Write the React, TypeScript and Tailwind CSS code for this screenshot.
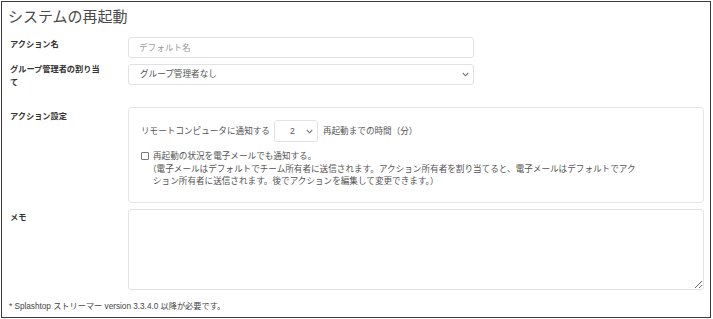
import React from "react";

const font = {
  fontFamily: '"Liberation Sans", "Noto Sans CJK JP", sans-serif',
};

function Chevron() {
  return (
    <svg width="7" height="5" viewBox="0 0 7 5" className="shrink-0">
      <path d="M0.8 1 L3.5 3.8 L6.2 1" fill="none" stroke="#777" strokeWidth="1.1" />
    </svg>
  );
}

function Label({ children, className = "" }: { children: React.ReactNode; className?: string }) {
  return (
    <div className={`w-[126px] shrink-0 pl-2 pr-2 text-[8.2px] font-bold leading-[13px] text-[#333] ${className}`}>
      {children}
    </div>
  );
}

export default function App() {
  return (
    <div className="h-[319px] w-[713px] bg-white p-px" style={font}>
      <div className="flex h-[317px] w-[710px] flex-col border border-[#3a3a3a] pr-[6px]">
        <h1 className="ml-[6px] mt-[5px] text-[15px] font-normal leading-[20px] text-[#4a4a4a]">
          システムの再起動
        </h1>

        <div className="mt-[10px] flex">
          <Label className="pt-[1px]">アクション名</Label>
          <input
            placeholder="デフォルト名"
            className="h-[21px] w-[346px] rounded-[3px] border border-[#e2e2e2] px-[10px] text-[8.6px] text-[#555] outline-none placeholder:text-[#9a9a9a]"
          />
        </div>

        <div className="mt-[6px] flex">
          <Label className="-mt-[1px]">
            グループ管理者の割り当
            <br />て
          </Label>
          <div className="flex h-[21px] w-[346px] items-center justify-between rounded-[3px] border border-[#e2e2e2] pl-[11px] pr-[4px] text-[8.6px] text-[#555]">
            <span>グループ管理者なし</span>
            <Chevron />
          </div>
        </div>

        <div className="mt-[18px] flex">
          <Label className="pt-[3px]">アクション設定</Label>
          <div className="flex-1 rounded-[3px] border border-[#e6e6e6] pb-[14px] pl-[12px] pt-[12px] text-[8.6px] text-[#555]">
            <div className="flex h-[22px] items-center">
              <span>リモートコンピュータに通知する</span>
              <div className="ml-[4px] flex h-[22px] w-[44px] items-center justify-between rounded-[3px] border border-[#e2e2e2] pl-[15px] pr-[4px]">
                <span>2</span>
                <Chevron />
              </div>
              <span className="ml-[5px]">再起動までの時間（分）</span>
            </div>
            <div className="mt-[8px] flex leading-[12.5px]">
              <span className="mt-[2px] h-[8px] w-[8px] shrink-0 rounded-[1px] border border-[#777]" />
              <div className="ml-[4px]">
                <div>再起動の状況を電子メールでも通知する。</div>
                <div className="-ml-[5px]">
                  （電子メールはデフォルトでチーム所有者に送信されます。アクション所有者を割り当てると、電子メールはデフォルトでアク
                </div>
                <div>ション所有者に送信されます。後でアクションを編集して変更できます。）</div>
              </div>
            </div>
          </div>
        </div>

        <div className="mt-[6px] flex">
          <Label className="pt-[2px]">メモ</Label>
          <textarea className="h-[81px] flex-1 rounded-[3px] border border-[#e2e2e2] outline-none" />
        </div>

        <p className="ml-[7px] mt-[10px] text-[8.2px] leading-[13px] text-[#444]">
          * Splashtop ストリーマー version 3.3.4.0 以降が必要です。
        </p>
      </div>
    </div>
  );
}
